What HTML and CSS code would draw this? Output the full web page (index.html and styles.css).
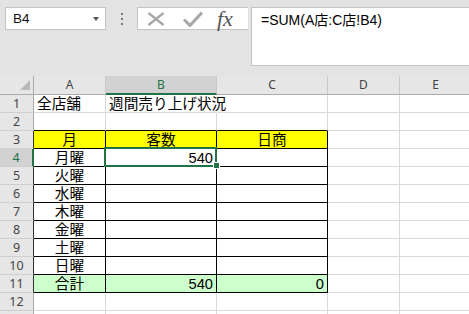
FILE: index.html
```html
<!DOCTYPE html>
<html lang="ja">
<head>
<meta charset="utf-8">
<title>Excel</title>
<link rel="stylesheet" href="styles.css">
</head>
<body>
<div class="app">
  <div class="topbar">
    <div class="namebox"><span class="nb-text">B4</span><span class="nb-arrow"></span></div>
    <div class="grip">
      <svg width="4" height="16" viewBox="0 0 4 16"><rect x="1" y="0" width="2" height="2" fill="#7a7a7a"/><rect x="1" y="5" width="2" height="2" fill="#7a7a7a"/><rect x="1" y="10" width="2" height="2" fill="#7a7a7a"/></svg>
    </div>
    <div class="fxbox">
      <svg class="ic-x" width="18" height="14" viewBox="0 0 18 14"><path d="M1.5 1 L16.5 13 M16.5 1 L1.5 13" stroke="#a8a8a8" stroke-width="2.4" fill="none"/></svg>
      <svg class="ic-ok" width="20" height="16" viewBox="0 0 20 16"><path d="M1 8.5 L7 14.5 L19 1.5" stroke="#a8a8a8" stroke-width="3" fill="none"/></svg>
      <span class="fx">fx</span>
    </div>
    <div class="formula">=SUM(A店:C店!B4)</div>
  </div>

  <div class="sheet">
    <div class="ch corner"><svg width="10" height="10" viewBox="0 0 10 10"><path d="M10 0 L10 10 L0 10 Z" fill="#b9b9b9"/></svg></div>
    <div class="ch">A</div>
    <div class="ch sel">B</div>
    <div class="ch">C</div>
    <div class="ch">D</div>
    <div class="ch">E</div>

    <div class="rh">1</div>
    <div class="c left">全店舗</div>
    <div class="c left over">週間売り上げ状況</div>
    <div class="c"></div>
    <div class="c"></div>
    <div class="c"></div>

    <div class="rh">2</div>
    <div class="c tt"></div>
    <div class="c tt"></div>
    <div class="c tt"></div>
    <div class="c"></div>
    <div class="c"></div>

    <div class="rh rt">3</div>
    <div class="c t yl ctr">月</div>
    <div class="c t yl ctr">客数</div>
    <div class="c t yl ctr">日商</div>
    <div class="c"></div>
    <div class="c"></div>

    <div class="rh rt rsel">4</div>
    <div class="c t ctr">月曜</div>
    <div class="c t num active">540</div>
    <div class="c t"></div>
    <div class="c"></div>
    <div class="c"></div>

    <div class="rh rt">5</div>
    <div class="c t ctr">火曜</div>
    <div class="c t"></div>
    <div class="c t"></div>
    <div class="c"></div>
    <div class="c"></div>

    <div class="rh rt">6</div>
    <div class="c t ctr">水曜</div>
    <div class="c t"></div>
    <div class="c t"></div>
    <div class="c"></div>
    <div class="c"></div>

    <div class="rh rt">7</div>
    <div class="c t ctr">木曜</div>
    <div class="c t"></div>
    <div class="c t"></div>
    <div class="c"></div>
    <div class="c"></div>

    <div class="rh rt">8</div>
    <div class="c t ctr">金曜</div>
    <div class="c t"></div>
    <div class="c t"></div>
    <div class="c"></div>
    <div class="c"></div>

    <div class="rh rt">9</div>
    <div class="c t ctr">土曜</div>
    <div class="c t"></div>
    <div class="c t"></div>
    <div class="c"></div>
    <div class="c"></div>

    <div class="rh rt">10</div>
    <div class="c t ctr">日曜</div>
    <div class="c t"></div>
    <div class="c t"></div>
    <div class="c"></div>
    <div class="c"></div>

    <div class="rh rt">11</div>
    <div class="c t gr ctr">合計</div>
    <div class="c t gr num">540</div>
    <div class="c t gr num">0</div>
    <div class="c"></div>
    <div class="c"></div>

    <div class="rh">12</div>
    <div class="c"></div>
    <div class="c"></div>
    <div class="c"></div>
    <div class="c"></div>
    <div class="c"></div>

    <div class="rh"></div>
    <div class="c"></div>
    <div class="c"></div>
    <div class="c"></div>
    <div class="c"></div>
    <div class="c"></div>
  </div>
</div>
</body>
</html>
```

FILE: styles.css
```css
html, body {
  margin: 0;
  padding: 0;
  width: 469px;
  height: 314px;
  overflow: hidden;
  background: #ffffff;
}

.app {
  width: 469px;
  height: 314px;
  overflow: hidden;
  background: #e3e3e3;
  font-family: "Liberation Sans", "Noto Sans CJK JP", sans-serif;
}

/* ---------- formula bar ---------- */
.topbar {
  height: 76px;
  box-sizing: border-box;
  padding: 7px 0 0 5px;
  display: flex;
  align-items: flex-start;
}

.namebox {
  width: 101px;
  height: 23px;
  box-sizing: border-box;
  background: #ffffff;
  border: 1px solid #c3c3c3;
  display: flex;
  align-items: center;
  padding-left: 7px;
}

.nb-text {
  font-family: "Liberation Sans", Arial, sans-serif;
  font-size: 13.5px;
  color: #111;
}

.nb-arrow {
  margin-left: auto;
  margin-right: 6px;
  margin-top: 1px;
  width: 0;
  height: 0;
  border-left: 3.5px solid transparent;
  border-right: 3.5px solid transparent;
  border-top: 4px solid #555;
}

.grip {
  width: 31px;
  height: 23px;
  display: flex;
  justify-content: center;
  align-items: center;
  padding-top: 4px;
  box-sizing: border-box;
}

.fxbox {
  width: 111px;
  height: 23px;
  box-sizing: border-box;
  background: #ffffff;
  border: 1px solid #c3c3c3;
  border-right: none;
  display: flex;
  align-items: center;
  padding-left: 9px;
}

.ic-x {
  display: block;
}

.ic-ok {
  display: block;
  margin-left: 18px;
}

.fx {
  margin-left: 14px;
  font-family: "Liberation Serif", "DejaVu Serif", serif;
  font-style: italic;
  font-size: 22px;
  color: #555555;
  line-height: 20px;
  margin-top: 0;
  letter-spacing: 0;
}

.formula {
  flex: 1;
  margin-left: 3px;
  margin-right: -4px;
  height: 59px;
  box-sizing: border-box;
  background: #ffffff;
  border: 1px solid #c3c3c3;
  padding: 4px 0 0 9px;
  font-size: 14px;
  line-height: 17px;
  color: #000;
  white-space: nowrap;
}

/* ---------- sheet grid ---------- */
.sheet {
  display: grid;
  grid-template-columns: 34px 72px 111px 111px 72px 72px;
  grid-template-rows: 19px;
  grid-auto-rows: 18px;
  background: #ffffff;
}

.sheet > div {
  box-sizing: border-box;
  border-right: 1px solid #d9d9d9;
  border-bottom: 1px solid #d9d9d9;
  font-size: 14.67px;
  line-height: 17px;
  color: #000;
  white-space: nowrap;
  min-width: 0;
}

.ch {
  background: #e6e6e6;
  border-right-color: #c8c8c8 !important;
  border-bottom-color: #ababab !important;
  font-family: "Noto Sans", "Liberation Sans", sans-serif;
  font-size: 12px !important;
  line-height: 18px !important;
  color: #444 !important;
  text-align: center;
}

.ch.corner {
  display: flex;
  justify-content: flex-end;
  align-items: flex-end;
  padding: 0 3px 4px 0;
  border-right-color: #ababab !important;
}

.ch.corner svg {
  display: block;
}

.ch.sel {
  background: #d2d2d2;
  color: #217346 !important;
  border-bottom: 2px solid #217346 !important;
}

.rh {
  background: #e6e6e6;
  border-right-color: #ababab !important;
  border-bottom-color: #cfcfcf !important;
  font-family: "Noto Sans", "Liberation Sans", sans-serif;
  font-size: 12.5px !important;
  line-height: 17px !important;
  color: #444 !important;
  text-align: center;
}

.rh.rt {
  border-right-color: #333 !important;
}

.rh.rsel {
  background: #d2d2d2;
  color: #217346 !important;
  border-right: 2px solid #217346 !important;
}

.c {
  padding: 1px 3px 0 3px;
}

.left {
  text-align: left;
}

.over {
  overflow: visible;
  border-right-color: transparent !important;
}

.ctr {
  text-align: center;
}

.num {
  text-align: right;
}

.tt {
  border-bottom-color: #000 !important;
}

.t {
  border-right-color: #000 !important;
  border-bottom-color: #000 !important;
}

.yl {
  background: #ffff00;
}

.gr {
  background: #ccffcc;
}

.active {
  position: relative;
}

.active::after {
  content: "";
  position: absolute;
  left: -2px;
  top: -2px;
  right: -1px;
  bottom: -1px;
  border: 2px solid #217346;
}

.active::before {
  content: "";
  position: absolute;
  right: -4px;
  bottom: -3px;
  width: 5px;
  height: 5px;
  background: #217346;
  border: 1px solid #ffffff;
  z-index: 2;
}
```
